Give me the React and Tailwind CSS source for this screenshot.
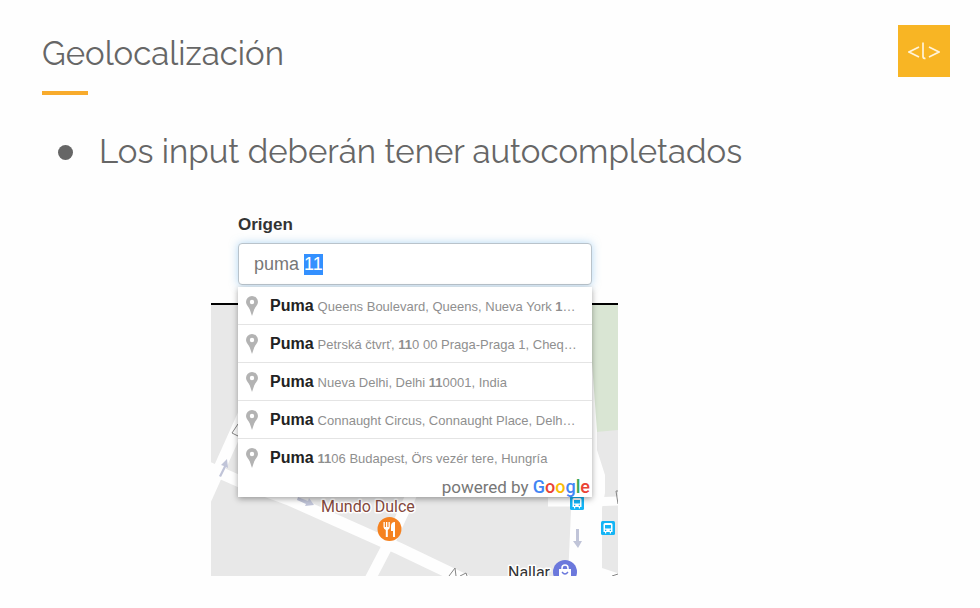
import { useEffect, useRef } from "react";

const places = [
  [["Queens Boulevard, Queens, Nueva York "], ["1", true], ["…"]],
  [["Petrská čtvrť, "], ["11", true], ["0 00 Praga-Praga 1, Cheq…"]],
  [["Nueva Delhi, Delhi "], ["11", true], ["0001, India"]],
  [["Connaught Circus, Connaught Place, Delh…"]],
  [["11", true], ["06 Budapest, Örs vezér tere, Hungría"]],
];

function Pin() {
  return (
    <svg className="h-5 w-3 shrink-0" viewBox="0 0 12 20" aria-hidden="true">
      <path
        fill="#b3b3b3"
        fillRule="evenodd"
        d="M6 0a6 6 0 0 1 6 6c0 3-2.600 4.500-3.800 7.500L6 20l-2.200-6.500C2.600 10.500 0 9 0 6a6 6 0 0 1 6-6zm0 3.800a2.200 2.200 0 1 0 0 4.400 2.200 2.200 0 0 0 0-4.400z"
      />
    </svg>
  );
}

function Logo() {
  return (
    <div className="flex size-[52px] items-center justify-center bg-[#f8b524]">
      <svg className="h-5 w-8" viewBox="0 0 32 20" fill="none" stroke="#fff4da" strokeWidth="1.7" role="img" aria-label="Logo">
        <path d="M11 6 1 11 11 16M21 6l10 5L21 16M15 1.500v14q0 2 2.500 2" />
      </svg>
    </div>
  );
}

function Bus({ x, y }) {
  return (
    <g transform={`translate(${x} ${y})`}>
      <rect width="14" height="14" rx="1.500" fill="#14b4f5" />
      <path fill="#fff" d="M4 2h6q1.500 0 1.500 1.500V11H10v1.500H8.800V11H5.200v1.500H4V11H2.500V3.500Q2.500 2 4 2z" />
      <path fill="#14b4f5" d="M4 4h6v3.500H4zM4 8.700h1.300V10H4zM8.700 8.700H10V10H8.700z" />
    </g>
  );
}

function StreetMap() {
  return (
    <svg className="block w-full" viewBox="0 2 407 271" role="img" aria-label="Mapa">
      <rect width="407" height="273" fill="#e8e8e8" />
      <path d="M376 0h31v127l-22 2z" fill="#d9e5d3" />
      <g fill="none" stroke="#fefefe">
        <path d="M-8 202 36 104" strokeWidth="12" />
        <path d="M-4 164 30 179 77 196 189 246 260 280" strokeWidth="12" />
        <path d="M156 282 180 236 204 184" strokeWidth="11" />
        <path d="M337 199h40l34-1" strokeWidth="9" />
      </g>
      <path d="M366 0h11l4 60 5 68v19l8 25v18l-3 15v60l18 6v3h-52l3-66V120z" fill="#fefefe" />
      <g fill="#c0c4d8">
        <path d="m8 173 5-10-3-1 6-6 1 9-2-1-5 10z" />
        <path d="m87 194 10 4 1-3 5 7-9 1 1-2-9-4z" />
        <path d="M365 226h3v12h3l-4 7-5-7h3z" />
      </g>
      <g fill="none" stroke="#858585" strokeWidth="1">
        <path d="m27 121-6 9 6 3 6-9M405 188l2 13M405 188h4M238 273l6-8 1 8M249 273l6-3 1 3M401 273l6-2" />
      </g>
      <Bus x={359} y={193} />
      <Bus x={390} y={218} />
      <circle cx="178.500" cy="226" r="12" fill="#f58220" />
      <path fill="#fff" d="M172.500 219h1.300v5h1.200v-5h1.300v5h1.200v-5h1.300v5q0 2-2 3v7h-2v-7q-2.300-1-2.300-3zM184 219v15h-2v-6h-2v-5q0-4 4-4z" />
      <circle cx="354" cy="269" r="12" fill="#6b78dc" />
      <path fill="#fff" d="M348 266h12v9h-12z" />
      <path d="M351 267v-2q0-3 3-3t3 3v2" fill="none" stroke="#fff" strokeWidth="1.500" />
      <path d="M351 269q3 4 6 0" fill="none" stroke="#6b78dc" strokeWidth="1.300" />
      <g className="font-['Roboto',sans-serif]" stroke="#fff" strokeWidth="3" paintOrder="stroke" strokeLinejoin="round">
        <text x="110" y="209" className="text-[16px]" fill="#84493d">Mundo Dulce</text>
        <text x="297" y="275" className="text-[16px]" fill="#333">Nallar</text>
      </g>
    </svg>
  );
}

function Suggestions() {
  return (
    <div className="absolute inset-x-0 top-full mt-0.5 bg-white shadow-[0_2px_6px_rgba(0,0,0,0.35)]">
      <ul>
        {places.map((parts, i) => (
          <li key={i} className="flex h-[38px] items-center border-b border-[#e4e4e4] pl-2 last:border-0">
            <Pin />
            <span className="ml-3 whitespace-nowrap text-[13px] text-[#8f8f8f]">
              <span className="mr-1 text-[16px] font-bold text-[#222]">Puma</span>
              {parts.map(([text, match], j) =>
                match ? <b key={j}>{text}</b> : <span key={j}>{text}</span>
              )}
            </span>
          </li>
        ))}
      </ul>
      <p className="h-5 pr-0.5 text-right font-['Roboto',sans-serif] text-[17px] leading-5 text-[#777]">
        powered by{" "}
        <span className="text-[18px] font-medium">
          <span className="text-[#4285f4]">G</span>
          <span className="text-[#ea4335]">o</span>
          <span className="text-[#fbbc05]">o</span>
          <span className="text-[#4285f4]">g</span>
          <span className="text-[#34a853]">l</span>
          <span className="text-[#ea4335]">e</span>
        </span>
      </p>
    </div>
  );
}

export default function App() {
  const origin = useRef(null);

  useEffect(() => {
    origin.current.focus();
    origin.current.setSelectionRange(5, 7);
  }, []);

  return (
    <main className="min-h-screen bg-[#fefefe] font-['Raleway','Lato',sans-serif] text-[#666]">
      <header className="flex items-start justify-between pt-[25px] pr-[30px] pl-[42px]">
        <div>
          <h1 className="pt-2 text-[33px] leading-[42px] font-normal">Geolocalización</h1>
          <div className="mt-4 h-1 w-[46px] bg-[#f8ab2c]" />
        </div>
        <Logo />
      </header>
      <ul className="mt-9 pl-[58px]">
        <li className="flex items-center text-[33px] leading-[42px] font-normal">
          <span className="mr-[26px] size-[15px] rounded-full bg-[#666]" />
          Los input deberán tener autocompletados
        </li>
      </ul>
      <section className="mt-[42px] ml-[211px] w-[407px] font-['Liberation_Sans',Arial,sans-serif]">
        <div className="pr-[26px] pl-[27px]">
          <label htmlFor="origen" className="block pb-2 text-[17px] leading-5 font-bold text-[#333]">
            Origen
          </label>
          <div className="relative">
            <input
              ref={origin}
              id="origen"
              type="text"
              defaultValue="puma 11"
              className="block h-[42px] w-full rounded border border-[#b9c3cb] bg-white px-[15px] text-[18px] text-[#777] shadow-[0_0_8px_rgba(102,175,233,0.5)] outline-none selection:bg-[#3390ff] selection:text-white"
            />
            <Suggestions />
          </div>
        </div>
        <div className="mt-[18px] border-t-2 border-black">
          <StreetMap />
        </div>
      </section>
    </main>
  );
}
